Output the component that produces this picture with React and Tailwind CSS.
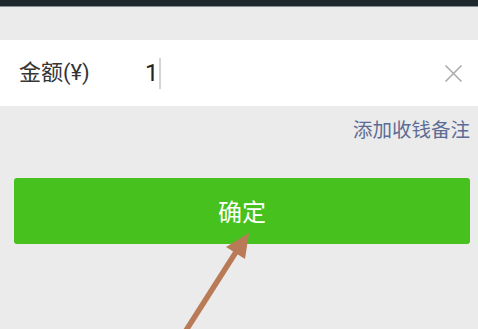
import React from "react";

export default function App() {
  return (
    <div
      className="relative w-[478px] h-[329px] overflow-hidden bg-[#ebebeb]"
      style={{ fontFamily: 'Roboto, "Noto Sans CJK SC", sans-serif' }}
    >
      <div className="h-[6px] bg-[#1f282c]" />
      <div className="h-[1px] bg-[#8a8f91]" />
      <div className="mt-[33px] h-[66px] bg-white flex items-center pl-[19px] pr-[15px]">
        <span className="w-[126px] text-[22px] leading-none text-[#353535]">金额(¥)</span>
        <span className="text-[24px] leading-none text-[#222]">1</span>
        <span className="ml-[0px] w-[2px] h-[31px] bg-[#d4d4d4]" />
        <div className="flex-1" />
        <svg width="19" height="19" viewBox="0 0 19 19" className="shrink-0">
          <path d="M1.5 1.5 L17.5 17.5 M17.5 1.5 L1.5 17.5" stroke="#ababab" strokeWidth="1.6" />
        </svg>
      </div>
      <div className="flex justify-end pr-[8px] pt-[13px] h-[72px]">
        <span className="text-[19.5px] leading-[24px] text-[#5c6c94]">添加收钱备注</span>
      </div>
      <div className="ml-[14px] mr-[8px] h-[66px] rounded-[3px] bg-[#46c11e] flex items-center justify-center pt-[3px]">
        <span className="text-[24px] leading-none text-white">确定</span>
      </div>
      <svg
        className="absolute left-0 top-0 pointer-events-none"
        width="478"
        height="329"
        viewBox="0 0 478 329"
      >
        <line x1="185" y1="332" x2="236" y2="252" stroke="#b97b57" strokeWidth="5.5" />
        <polygon points="249,233 226,247 245,259" fill="#b97b57" />
      </svg>
    </div>
  );
}
